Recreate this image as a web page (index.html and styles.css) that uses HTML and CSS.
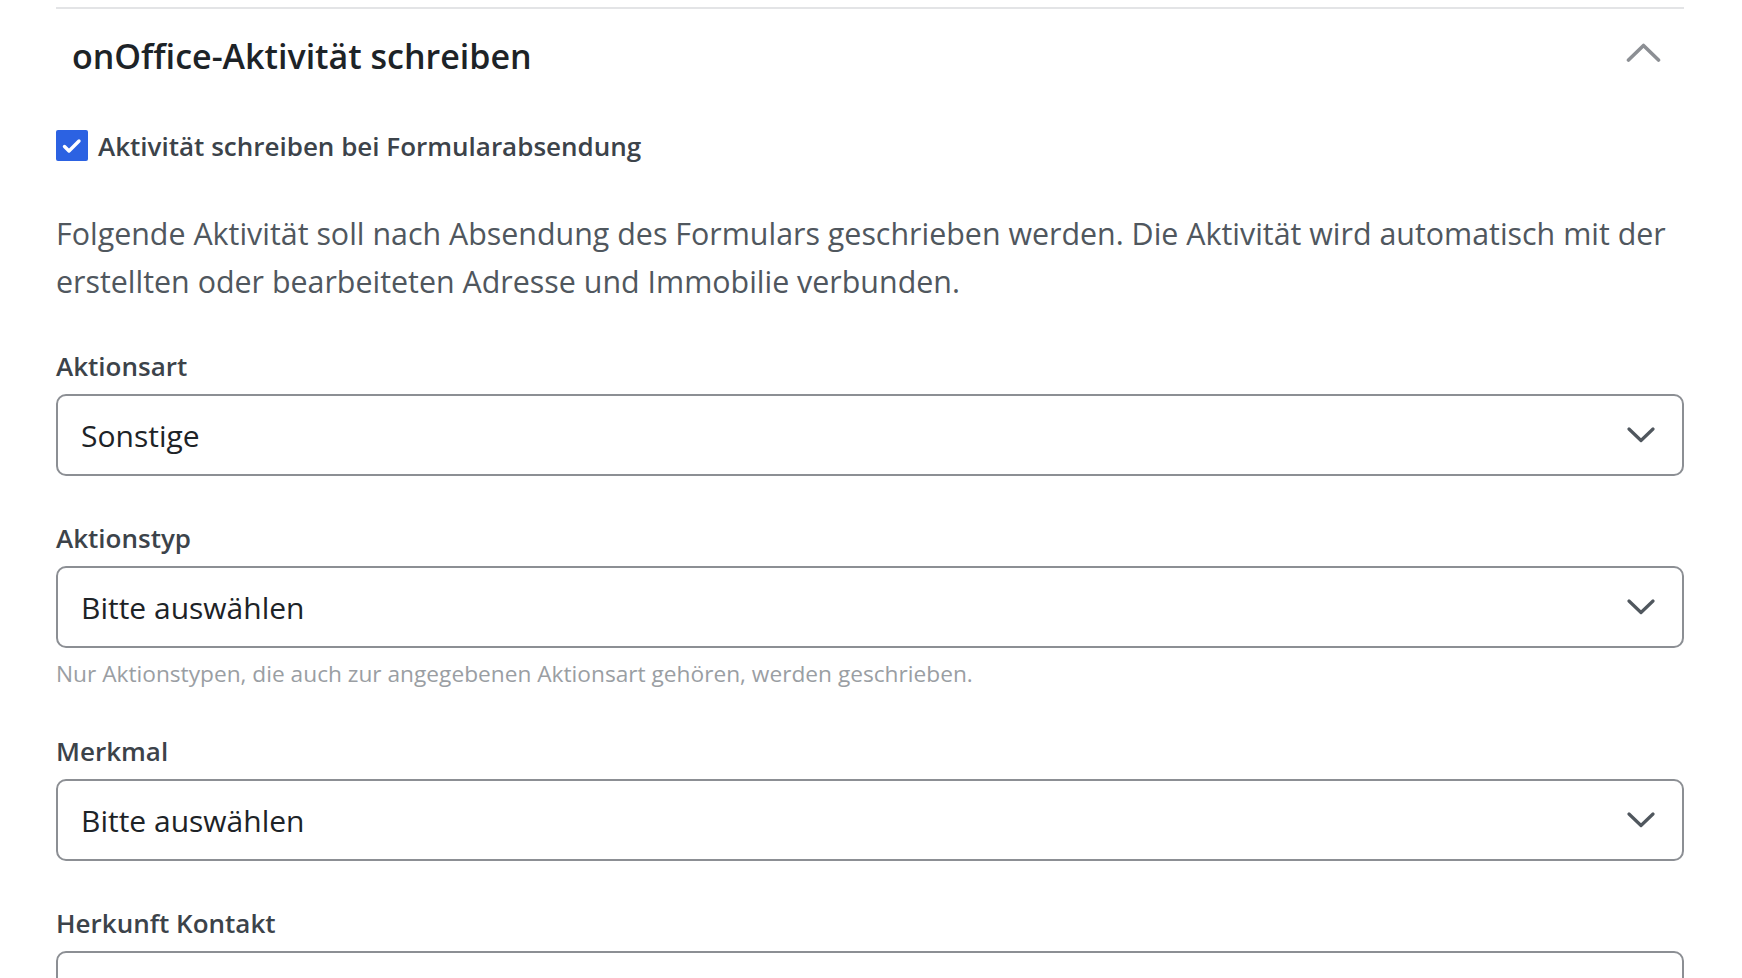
FILE: index.html
```html
<!DOCTYPE html>
<html lang="de">
<head>
<meta charset="utf-8">
<title>onOffice-Aktivität schreiben</title>
<link rel="stylesheet" href="styles.css">
</head>
<body>
<section class="panel">
  <div class="panel-head">
    <h2 class="panel-title">onOffice-Aktivität schreiben</h2>
    <span class="toggle">
      <svg width="35" height="21" viewBox="0 0 35 21"><path d="M2.5 18 L17.5 3.5 L32.5 18" fill="none" stroke="#8c8f94" stroke-width="3.6" stroke-linecap="round" stroke-linejoin="round"/></svg>
    </span>
  </div>
  <label class="check-row">
    <span class="checkbox">
      <svg width="20" height="16" viewBox="0 0 20 16"><path d="M2.5 8.5 L7 13 L17 3" fill="none" stroke="#fff" stroke-width="3.4" stroke-linecap="round" stroke-linejoin="round"/></svg>
    </span>
    <span class="check-label">Aktivität schreiben bei Formularabsendung</span>
  </label>
  <p class="desc">Folgende Aktivität soll nach Absendung des Formulars geschrieben werden. Die Aktivität wird automatisch mit der erstellten oder bearbeiteten Adresse und Immobilie verbunden.</p>

  <div class="field">
    <div class="field-label">Aktionsart</div>
    <div class="select"><span>Sonstige</span><svg class="chev" width="28" height="16" viewBox="0 0 28 16"><path d="M2 2 L14 13.5 L26 2" fill="none" stroke="#50575e" stroke-width="3.2" stroke-linecap="round" stroke-linejoin="round"/></svg></div>
  </div>
  <div class="field">
    <div class="field-label">Aktionstyp</div>
    <div class="select"><span>Bitte auswählen</span><svg class="chev" width="28" height="16" viewBox="0 0 28 16"><path d="M2 2 L14 13.5 L26 2" fill="none" stroke="#50575e" stroke-width="3.2" stroke-linecap="round" stroke-linejoin="round"/></svg></div>
    <div class="help">Nur Aktionstypen, die auch zur angegebenen Aktionsart gehören, werden geschrieben.</div>
  </div>
  <div class="field">
    <div class="field-label">Merkmal</div>
    <div class="select"><span>Bitte auswählen</span><svg class="chev" width="28" height="16" viewBox="0 0 28 16"><path d="M2 2 L14 13.5 L26 2" fill="none" stroke="#50575e" stroke-width="3.2" stroke-linecap="round" stroke-linejoin="round"/></svg></div>
  </div>
  <div class="field">
    <div class="field-label">Herkunft Kontakt</div>
    <div class="select"></div>
  </div>
</section>
</body>
</html>
```
FILE: styles.css
```css
html, body {
  margin: 0;
  padding: 0;
  background: #fff;
}
body {
  font-family: "Open Sans", "Noto Sans", sans-serif;
  color: #1d2327;
  overflow: hidden;
  height: 978px;
}
.panel {
  margin: 7px 58px 0 56px;
  border-top: 2px solid #e3e4e6;
}
.panel-head {
  display: flex;
  align-items: center;
  justify-content: space-between;
  height: 92px;
  padding: 2px 23px 0 16px;
  box-sizing: border-box;
}
.panel-title {
  margin: 0;
  font-size: 34px;
  font-weight: 600;
  line-height: 44px;
  color: #1d2327;
}
.toggle {
  display: flex;
  margin-top: -8px;
}
.check-row {
  display: flex;
  align-items: center;
  gap: 10px;
  height: 89px;
}
.checkbox {
  width: 32px;
  height: 31px;
  border-radius: 2px;
  background: #2c62e2;
  display: flex;
  align-items: center;
  justify-content: center;
  flex: none;
}
.check-label {
  font-size: 26px;
  font-weight: 600;
  color: #3c434a;
}
.desc {
  margin: 20px 0 0 0;
  font-size: 30.4px;
  line-height: 48px;
  color: #50575e;
}
.field {
  margin-top: 42px;
}
.field + .field {
  margin-top: 44px;
}
.field-label {
  font-size: 26px;
  font-weight: 600;
  line-height: 36px;
  color: #3c434a;
  margin-bottom: 10px;
}
.select {
  height: 78px;
  border: 2px solid #8c8f94;
  border-radius: 10px;
  display: flex;
  align-items: center;
  justify-content: space-between;
  padding: 0 27px 0 23px;
  font-size: 30px;
  color: #1d2327;
}
.chev {
  display: block;
}
.help {
  margin-top: 11px;
  font-size: 22.7px;
  line-height: 30px;
  color: #9a9ea3;
}
```
